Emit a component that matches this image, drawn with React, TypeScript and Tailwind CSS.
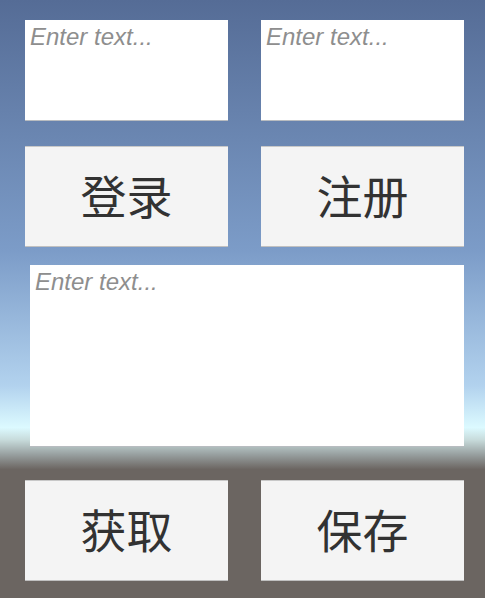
import React from 'react';

const Field = ({ className = '' }: { className?: string }) => (
  <div className={`bg-white border-b border-[#b8bcc0] pl-[5px] pt-[3px] ${className}`}>
    <span className="font-['Liberation_Sans',sans-serif] italic text-[24px] leading-[28px] text-[#8e8e8e]">
      Enter text...
    </span>
  </div>
);

const Btn = ({ label }: { label: string }) => (
  <button className="h-[101px] bg-[#f4f4f4] border-t border-[#c8c8c8] border-b border-b-[#c0c0c0] flex items-center justify-center">
    <span className="font-['Noto_Sans_CJK_SC',sans-serif] text-[46px] leading-none text-[#323232] pb-[6px]">
      {label}
    </span>
  </button>
);

export default function App() {
  return (
    <div className="w-[485px] h-[598px] overflow-hidden bg-[linear-gradient(to_bottom,#556c96_0%,#7c9cc8_42%,#b2d2ee_64.5%,#dcfaff_71.5%,#c8dcdc_73.5%,#98a0a0_76%,#6b6561_78.5%,#6b6561_100%)]">
      <div className="pl-[25px] pr-[21px] pt-[20px] flex flex-col">
        <div className="grid grid-cols-2 gap-x-[33px] gap-y-[25px]">
          <Field className="h-[101px]" />
          <Field className="h-[101px]" />
          <Btn label="登录" />
          <Btn label="注册" />
        </div>
        <Field className="h-[182px] mt-[18px] ml-[5px]" />
        <div className="grid grid-cols-2 gap-x-[33px] mt-[33px]">
          <Btn label="获取" />
          <Btn label="保存" />
        </div>
      </div>
    </div>
  );
}
